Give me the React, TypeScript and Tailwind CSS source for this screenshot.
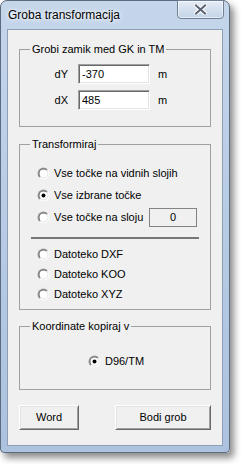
import React, { useId } from 'react'

const font = { fontFamily: '"Liberation Sans", Arial, sans-serif' }

const Radio: React.FC<{ checked?: boolean }> = ({ checked }) => {
  const id = useId().replace(/:/g, '')
  return (
    <svg width="13" height="13" viewBox="0 0 13 13" className="shrink-0">
      <defs>
        <linearGradient id={`o${id}`} x1="0" y1="0" x2="1" y2="1">
          <stop offset="0.45" stopColor="#a0a0a0" />
          <stop offset="0.55" stopColor="#ffffff" />
        </linearGradient>
        <linearGradient id={`i${id}`} x1="0" y1="0" x2="1" y2="1">
          <stop offset="0.45" stopColor="#696969" />
          <stop offset="0.55" stopColor="#e3e3e3" />
        </linearGradient>
      </defs>
      <circle cx="6.5" cy="6.5" r="6" fill={`url(#o${id})`} />
      <circle cx="6.5" cy="6.5" r="5" fill={`url(#i${id})`} />
      <circle cx="6.5" cy="6.5" r="4" fill="#ffffff" />
      {checked && <circle cx="6.5" cy="6.5" r="2" fill="#000000" />}
    </svg>
  )
}

const RadioRow: React.FC<{ label: string; checked?: boolean; className?: string }> = ({
  label,
  checked,
  className = '',
}) => (
  <div className={`flex items-center gap-[4px] ${className}`}>
    <Radio checked={checked} />
    <span className="leading-[13px]">{label}</span>
  </div>
)

const Group: React.FC<{ title: string; className?: string; children: React.ReactNode }> = ({
  title,
  className = '',
  children,
}) => (
  <fieldset className={`mx-[11px] border border-[#a0a0a0] ${className}`}>
    <legend className="ml-[10px] px-[2px] leading-[13px]">{title}</legend>
    {children}
  </fieldset>
)

const sunken =
  'border border-t-[#a0a0a0] border-l-[#a0a0a0] border-r-white border-b-white shadow-[inset_1px_1px_0_#696969,inset_-1px_-1px_0_#e3e3e3]'

const raised =
  'border border-t-white border-l-white border-r-[#696969] border-b-[#696969] shadow-[inset_1px_1px_0_#e3e3e3,inset_-1px_-1px_0_#a0a0a0] bg-[#f0f0f0]'

export default function App() {
  return (
    <div className="w-[243px] h-[464px] bg-white text-[11px] text-black" style={font}>
      <div className="w-[230px] h-[453px] flex flex-col border border-[#5d6b7e] rounded-t-[7px] rounded-b-[4px] bg-gradient-to-b from-[#c5d6eb] via-[#b7cbe4] to-[#acc2de] shadow-[4px_5px_7px_rgba(0,0,0,0.45)]">
        {/* Title bar */}
        <div className="h-[28px] flex items-start justify-between shrink-0">
          <span className="mt-[7px] ml-[7px] text-[12px] leading-[15px] [text-shadow:0_0_6px_#ffffff,0_0_3px_#ffffff]">
            Groba transformacija
          </span>
          <div className="mr-[5px] -mt-px w-[47px] h-[19px] rounded-b-[4px] border border-[#6f7f95] bg-gradient-to-b from-[#e4ecf6] to-[#c3d3e7] shadow-[inset_0_0_0_1px_rgba(255,255,255,0.6)] flex items-center justify-center">
            <svg width="13" height="11" viewBox="0 0 13 11">
              <path
                d="M2 1.5 L11 9.5 M11 1.5 L2 9.5"
                stroke="#ffffff"
                strokeWidth="4"
                strokeLinecap="square"
              />
              <path
                d="M2 1.5 L11 9.5 M11 1.5 L2 9.5"
                stroke="#5b6373"
                strokeWidth="2"
                strokeLinecap="square"
              />
            </svg>
          </div>
        </div>

        {/* Client area */}
        <div className="mx-[6px] h-[417px] border border-[#8d9fb6] bg-[#f0f0f0] pt-[13px]">
          <Group title="Grobi zamik med GK in TM" className="pt-[8px] pb-[16px]">
            <div className="flex flex-col gap-[6px]">
              {[
                ['dY', '-370'],
                ['dX', '485'],
              ].map(([label, value]) => (
                <div key={label} className="flex items-center h-[20px]">
                  <span className="w-[48px] text-right">{label}</span>
                  <div
                    className={`ml-[10px] w-[72px] h-[20px] bg-white pl-[3px] flex items-center ${sunken}`}
                  >
                    {value}
                  </div>
                  <span className="ml-[8px]">m</span>
                </div>
              ))}
            </div>
          </Group>

          <Group title="Transformiraj" className="mt-[11px] pt-[11px] pb-[5px]">
            <div className="pl-[17px]">
              <RadioRow label="Vse točke na vidnih slojih" className="h-[22px]" />
              <RadioRow label="Vse izbrane točke" checked className="h-[22px]" />
              <div className="flex items-center h-[22px]">
                <RadioRow label="Vse točke na sloju" className="w-[112px]" />
                <div className="w-[48px] h-[19px] border border-[#838383] bg-[#f0f0f0] flex items-center justify-center">
                  0
                </div>
              </div>
            </div>
            <div className="mt-[9px] ml-[11px] w-[168px] h-[2px] bg-[#777777]" />
            <div className="pl-[17px] mt-[5px]">
              <RadioRow label="Datoteko DXF" className="h-[20px]" />
              <RadioRow label="Datoteko KOO" className="h-[20px]" />
              <RadioRow label="Datoteko XYZ" className="h-[20px]" />
            </div>
          </Group>

          <Group title="Koordinate kopiraj v" className="mt-[10px] pt-[18px] pb-[18px]">
            <div className="flex justify-center pl-[2px]">
              <RadioRow label="D96/TM" checked className="h-[20px]" />
            </div>
          </Group>

          <div className="mx-[11px] mt-[15px] flex justify-between">
            <button className={`w-[60px] h-[25px] ${raised}`}>Word</button>
            <button className={`w-[96px] h-[25px] ${raised}`}>Bodi grob</button>
          </div>
        </div>
      </div>
    </div>
  )
}
